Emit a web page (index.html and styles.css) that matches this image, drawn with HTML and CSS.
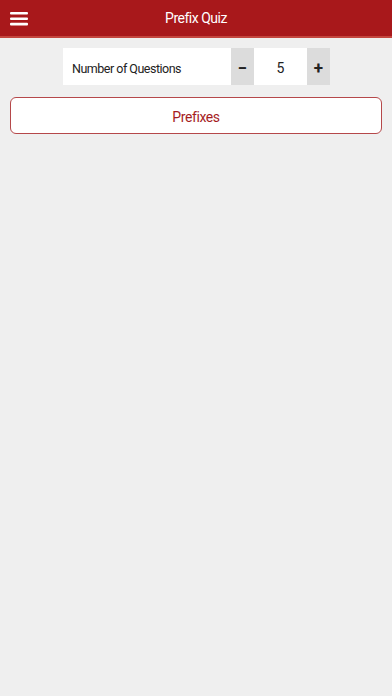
FILE: index.html
```html
<!DOCTYPE html>
<html>
<head>
<meta charset="utf-8">
<link rel="stylesheet" href="styles.css">
</head>
<body>
<header class="topbar">
  <div class="menu-btn" aria-label="Menu">
    <svg width="18" height="14" viewBox="0 0 18 14"><rect x="0" y="0" width="18" height="2.6" rx="1" fill="#fff"/><rect x="0" y="5.4" width="18" height="2.6" rx="1" fill="#fff"/><rect x="0" y="10.8" width="18" height="2.6" rx="1" fill="#fff"/></svg>
  </div>
  <div class="title">Prefix Quiz</div>
</header>
<main class="content">
  <div class="stepper-row">
    <div class="stepper">
      <div class="label">Number of Questions</div>
      <div class="step-btn">&minus;</div>
      <div class="value">5</div>
      <div class="step-btn">+</div>
    </div>
  </div>
  <div class="category-btn">Prefixes</div>
</main>
</body>
</html>
```
FILE: styles.css
```css
html, body {
  margin: 0;
  padding: 0;
  background: #efefef;
  font-family: Roboto, "Liberation Sans", sans-serif;
}
.topbar {
  height: 36px;
  background: #a8181b;
  border-bottom: 2px solid #c4463f;
  display: flex;
  align-items: center;
  justify-content: center;
  position: relative;
  color: #fff;
}
.menu-btn {
  position: absolute;
  left: 10px;
  top: 12px;
  width: 18px;
  height: 14px;
  display: flex;
}
.title {
  font-size: 14px;
  letter-spacing: -0.5px;
}
.content {
  padding: 10px 10px 0;
}
.stepper-row {
  display: flex;
  justify-content: center;
}
.stepper {
  display: flex;
  height: 37px;
  margin-left: 1px;
}
.label {
  width: 168px;
  box-sizing: border-box;
  background: #fff;
  padding-left: 9px;
  padding-top: 4px;
  display: flex;
  align-items: center;
  font-size: 12.5px;
  letter-spacing: -0.5px;
  color: #222;
}
.step-btn {
  width: 23px;
  box-sizing: border-box;
  background: #dcdcdc;
  display: flex;
  align-items: center;
  justify-content: center;
  font-size: 17px;
  font-weight: bold;
  color: #222;
  padding-top: 2px;
}
.value {
  width: 53px;
  box-sizing: border-box;
  background: #fff;
  display: flex;
  align-items: center;
  justify-content: center;
  font-size: 14px;
  padding-top: 3px;
  color: #222;
}
.category-btn {
  margin-top: 12px;
  height: 35px;
  box-sizing: border-box;
  height: 37px;
  border: 1px solid #b5484a;
  border-radius: 6px;
  background: #fff;
  display: flex;
  align-items: center;
  justify-content: center;
  color: #a51c1e;
  font-size: 14px;
  letter-spacing: -0.4px;
  padding-top: 2px;
}
```
